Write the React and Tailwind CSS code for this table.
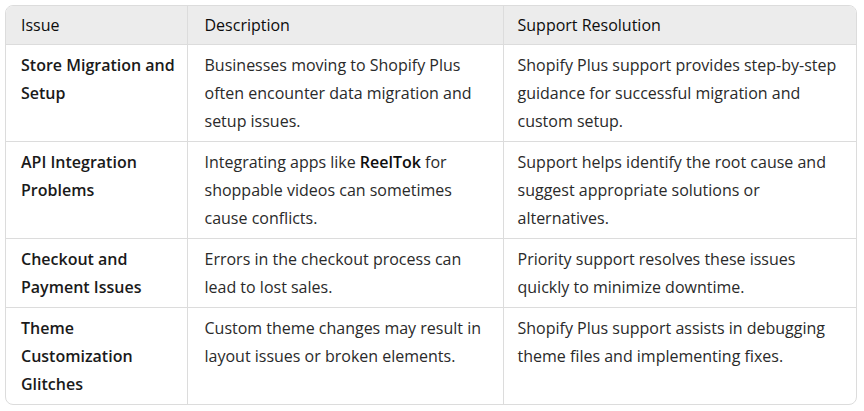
const rows = [
  {
    issue: "Store Migration and Setup",
    desc: <>Businesses moving to Shopify Plus often encounter data migration and setup issues.</>,
    res: "Shopify Plus support provides step-by-step guidance for successful migration and custom setup.",
  },
  {
    issue: "API Integration Problems",
    desc: (
      <>
        Integrating apps like <strong className="font-semibold text-[#0d0d0d]">ReelTok</strong> for shoppable videos can
        sometimes cause conflicts.
      </>
    ),
    res: "Support helps identify the root cause and suggest appropriate solutions or alternatives.",
  },
  {
    issue: "Checkout and Payment Issues",
    desc: <>Errors in the checkout process can lead to lost sales.</>,
    res: "Priority support resolves these issues quickly to minimize downtime.",
  },
  {
    issue: "Theme Customization Glitches",
    desc: <>Custom theme changes may result in layout issues or broken elements.</>,
    res: "Shopify Plus support assists in debugging theme files and implementing fixes.",
  },
];

export default function App() {
  return (
    <div className="bg-white w-[864px] h-[411px] pt-[5px] pl-[5px] font-['Open_Sans',sans-serif] text-[16px] leading-[28px] text-[#2a2a2a]">
      <div className="w-[852px] border border-[#dcdcdc] rounded-lg overflow-hidden">
        <table className="w-full table-fixed border-collapse">
          <colgroup>
            <col className="w-[181px]" />
            <col className="w-[316px]" />
            <col />
          </colgroup>
          <thead>
            <tr className="bg-[#ececec] text-[#0d0d0d]">
              <th className="text-left font-normal pl-[15px] pr-[6px] py-[5px] border-r border-[#dcdcdc]">Issue</th>
              <th className="text-left font-normal pl-[17px] pr-[6px] py-[5px] border-r border-[#dcdcdc]">Description</th>
              <th className="text-left font-normal pl-[14px] pr-[6px] py-[5px]">Support Resolution</th>
            </tr>
          </thead>
          <tbody>
            {rows.map((r) => (
              <tr key={r.issue} className="border-t border-[#dcdcdc] align-top">
                <td className="pl-[15px] pr-[6px] pt-[6px] pb-[6px] border-r border-[#dcdcdc] font-semibold text-[#1a1a1a]">
                  {r.issue}
                </td>
                <td className="pl-[17px] pr-[8px] pt-[6px] pb-[6px] border-r border-[#dcdcdc]">{r.desc}</td>
                <td className="pl-[14px] pr-[8px] pt-[6px] pb-[6px]">{r.res}</td>
              </tr>
            ))}
          </tbody>
        </table>
      </div>
    </div>
  );
}
